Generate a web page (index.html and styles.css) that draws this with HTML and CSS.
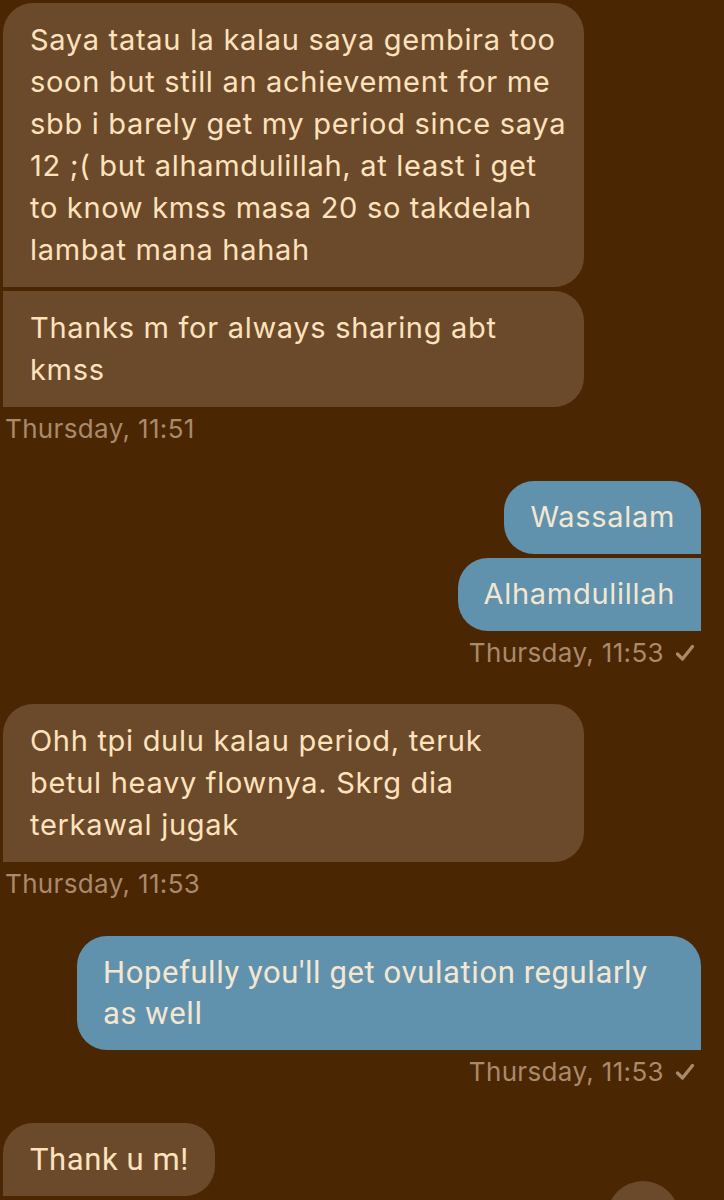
FILE: index.html
```html
<!DOCTYPE html>
<html lang="ms">
<head>
<meta charset="utf-8">
<title>Messages</title>
<link rel="stylesheet" href="styles.css">
</head>
<body>
<main class="chat">
  <section class="group in">
    <div class="bubble in full top">Saya tatau la kalau saya gembira too<br>soon but still an achievement for me<br>sbb i barely get my period since saya<br>12 ;( but alhamdulillah, at least i get<br>to know kmss masa 20 so takdelah<br>lambat mana hahah</div>
    <div class="bubble in full mid">Thanks m for always sharing abt<br>kmss</div>
    <div class="time">Thursday, 11:51</div>
  </section>

  <section class="group out">
    <div class="bubble out top">Wassalam</div>
    <div class="bubble out mid">Alhamdulillah</div>
    <div class="time">Thursday, 11:53
      <svg class="check" viewBox="0 0 20 20" aria-hidden="true"><path d="M2.5 11 L7.5 16 L17.5 3.5" fill="none" stroke="currentColor" stroke-width="3.3" stroke-linecap="round" stroke-linejoin="round"/></svg>
    </div>
  </section>

  <section class="group in">
    <div class="bubble in full top">Ohh tpi dulu kalau period, teruk<br>betul heavy flownya. Skrg dia<br>terkawal jugak</div>
    <div class="time">Thursday, 11:53</div>
  </section>

  <section class="group out">
    <div class="bubble out top wide squeezed">Hopefully you'll get ovulation regularly<br>as well</div>
    <div class="time">Thursday, 11:53
      <svg class="check" viewBox="0 0 20 20" aria-hidden="true"><path d="M2.5 11 L7.5 16 L17.5 3.5" fill="none" stroke="currentColor" stroke-width="3.3" stroke-linecap="round" stroke-linejoin="round"/></svg>
    </div>
  </section>

  <section class="group in">
    <div class="bubble in top squeezed">Thank u m!</div>
  </section>
</main>
<button class="scroll-down" aria-label="Scroll to bottom"></button>
</body>
</html>
```

FILE: styles.css
```css
html, body {
  margin: 0;
  padding: 0;
  background: #4b2603;
  height: 100%;
  overflow: hidden;
}

body {
  font-family: Inter, "Liberation Sans", sans-serif;
  position: relative;
}

.chat {
  display: flex;
  flex-direction: column;
  gap: 36.5px;
  padding: 3px 23px 0 3px;
}

.group {
  display: flex;
  flex-direction: column;
  gap: 4px;
}

.group.in { align-items: flex-start; }
.group.out { align-items: flex-end; }

.bubble {
  box-sizing: border-box;
  padding: 16px 26px;
  font-size: 29px;
  line-height: 42px;
  border-radius: 30px;
  letter-spacing: 0.7px;
  white-space: nowrap;
}

.bubble.in {
  background: #6b4a2b;
  color: #fde2bd;
  padding-left: 27px;
}

.bubble.out {
  background: #6192ad;
  color: #f4e7d2;
  padding-top: 15.5px;
  padding-bottom: 15.5px;
}

.bubble.full { width: 581px; }
.bubble.wide { width: 624px; }

.bubble.in.top { border-bottom-left-radius: 0; }
.bubble.in.mid { border-top-left-radius: 0; border-bottom-left-radius: 0; }
.bubble.out.top { border-bottom-right-radius: 0; }
.bubble.out.mid { border-top-right-radius: 0; border-bottom-right-radius: 0; }

.bubble.squeezed {
  font-family: Roboto, "Liberation Sans", sans-serif;
  font-size: 31px;
  letter-spacing: 0.6px;
  line-height: 41px;
  padding-top: 16px;
  padding-bottom: 16px;
}

.time {
  display: flex;
  align-items: center;
  gap: 11px;
  margin-top: 3px;
  padding: 0 2px;
  font-size: 26px;
  letter-spacing: 0.35px;
  line-height: 30px;
  color: #a98a6b;
}

.group.out .time {
  padding-right: 6px;
}

.check {
  display: block;
  width: 20px;
  height: 20px;
}

.scroll-down {
  position: absolute;
  left: 607px;
  top: 1181px;
  width: 72px;
  height: 72px;
  border: none;
  border-radius: 50%;
  background: #6b4a2b;
  padding: 0;
}
```
